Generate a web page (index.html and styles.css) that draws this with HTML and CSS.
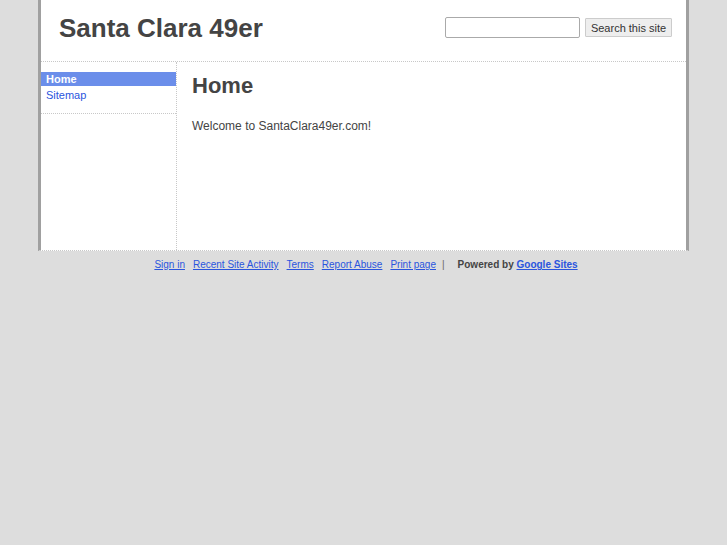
FILE: index.html
```html
<!DOCTYPE html>
<html>
<head>
<meta charset="utf-8">
<link rel="stylesheet" href="styles.css">
</head>
<body>
<div class="wrap">
  <div class="header">
    <div class="title">Santa Clara 49er</div>
    <div class="search">
      <input class="search-box" type="text">
      <button class="search-btn">Search this site</button>
    </div>
  </div>
  <div class="body">
    <div class="sidebar">
      <ul class="nav">
        <li class="nav-item active">Home</li>
        <li class="nav-item"><a href="#">Sitemap</a></li>
      </ul>
    </div>
    <div class="main">
      <h1 class="page-title">Home</h1>
      <p class="welcome">Welcome to SantaClara49er.com!</p>
    </div>
  </div>
</div>
<div class="footer">
  <a href="#">Sign in</a>
  <a href="#">Recent Site Activity</a>
  <a href="#">Terms</a>
  <a href="#">Report Abuse</a>
  <a href="#">Print page</a>
  <span class="sep">|</span>
  <span class="powered">Powered by <a href="#">Google Sites</a></span>
</div>
</body>
</html>
```
FILE: styles.css
```css
html, body {
  margin: 0;
  padding: 0;
  background: #dddddd;
  font-family: "Liberation Sans", Arial, sans-serif;
  color: #444444;
}
.wrap {
  margin-left: 38px;
  width: 645px;
  background: #ffffff;
  border-left: 3px solid #a0a0a0;
  border-right: 3px solid #a0a0a0;
  border-bottom: 1px dotted #c8c8c8;
}
.header {
  height: 61px;
  border-bottom: 1px dotted #c8c8c8;
  display: flex;
  align-items: flex-start;
  justify-content: space-between;
}
.title {
  margin: 12px 0 0 18px;
  font-size: 26px;
  font-weight: bold;
  color: #444444;
  line-height: 32px;
}
.search {
  display: flex;
  align-items: center;
  gap: 5px;
  margin: 17px 14px 0 0;
}
.search-box {
  box-sizing: border-box;
  width: 135px;
  height: 21px;
  border: 1px solid #aaaaaa;
  border-radius: 2px;
  margin: 0;
  padding: 0;
}
.search-btn {
  box-sizing: border-box;
  height: 19px;
  width: 87px;
  padding: 0;
  margin: 0;
  border: 1px solid #cccccc;
  background: #eeeeee;
  font-family: "Liberation Sans", Arial, sans-serif;
  font-size: 11px;
  color: #333333;
  border-radius: 1px;
}
.body {
  display: flex;
  height: 188px;
}
.sidebar {
  width: 135px;
  border-right: 1px dotted #c8c8c8;
}
.nav {
  list-style: none;
  margin: 10px 0 0 0;
  padding: 0 0 8px 0;
  border-bottom: 1px dotted #c8c8c8;
}
.nav-item {
  font-size: 11px;
  line-height: 14px;
  padding: 0 0 3px 5px;
}
.nav-item.active {
  background: #6b8eea;
  color: #ffffff;
  font-weight: bold;
  padding-bottom: 0;
  margin-bottom: 2px;
}
.nav-item a {
  color: #2a55dd;
  text-decoration: none;
}
.main {
  flex: 1;
  padding: 0 0 0 15px;
}
.page-title {
  margin: 11px 0 0 0;
  font-size: 22px;
  line-height: 26px;
  font-weight: bold;
  color: #444444;
}
.welcome {
  margin: 20px 0 0 0;
  font-size: 12px;
  line-height: 15px;
  color: #444444;
}
.footer {
  display: flex;
  justify-content: center;
  align-items: baseline;
  gap: 8px;
  font-size: 10px;
  padding: 7px 0 0 0;
  line-height: 13px;
  margin-left: 5px;
}
.footer a {
  color: #2a55dd;
}
.sep {
  color: #666666;
  margin: 0 5px 0 -2px;
}
.powered {
  font-weight: bold;
  color: #444444;
}
```
